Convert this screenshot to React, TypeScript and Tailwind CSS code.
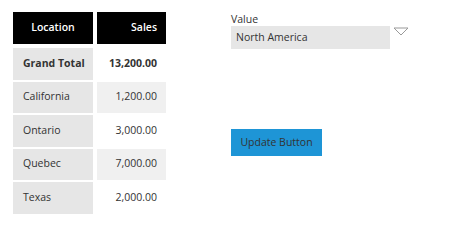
const rows = [
  { name: "California", sales: "1,200.00", shade: true },
  { name: "Ontario", sales: "3,000.00", shade: false },
  { name: "Quebec", sales: "7,000.00", shade: true },
  { name: "Texas", sales: "2,000.00", shade: false },
];

export default function App() {
  return (
    <div className="flex h-[244px] w-[450px] bg-white pl-[13px] pt-[12px] text-[10.5px] text-[#333] [font-family:'Open_Sans',sans-serif]">
      <div className="flex w-[153px] flex-col">
        <div className="grid h-[32px] grid-cols-[80px_69px] gap-x-[4px]">
          <div className="flex items-center justify-center bg-black font-semibold text-white">Location</div>
          <div className="flex items-center justify-end bg-black pr-[9px] font-semibold text-white">Sales</div>
        </div>
        <div className="mt-[4px] grid h-[31.5px] grid-cols-[80px_69px] gap-x-[4px]">
          <div className="flex items-center bg-[#e6e6e6] pl-[10px] font-bold">Grand Total</div>
          <div className="flex items-center justify-end bg-white pr-[9px] font-bold">13,200.00</div>
        </div>
        {rows.map((r) => (
          <div key={r.name} className="mt-[2px] grid h-[31.5px] grid-cols-[80px_69px] gap-x-[4px]">
            <div className="flex items-center bg-[#e6e6e6] pl-[10px]">{r.name}</div>
            <div className={`flex items-center justify-end pr-[9px] ${r.shade ? "bg-[#f0f0f0]" : "bg-white"}`}>
              {r.sales}
            </div>
          </div>
        ))}
      </div>

      <div className="ml-[65px] flex flex-col">
        <div className="mt-[1px] leading-[13px]">Value</div>
        <div className="flex items-start">
          <div className="flex h-[23px] w-[159px] items-center bg-[#e6e6e6] pl-[5px]">North America</div>
          <svg width="16" height="9" viewBox="0 0 16 9" className="ml-[3px] mt-[1px]">
            <path d="M1 1 L15 1 L8 8 Z" fill="none" stroke="#999" strokeWidth="1" />
          </svg>
        </div>
        <button className="mt-[80px] h-[27px] w-[91px] bg-[#1e95d6] text-[10.5px] text-[#333]">
          Update Button
        </button>
      </div>
    </div>
  );
}
